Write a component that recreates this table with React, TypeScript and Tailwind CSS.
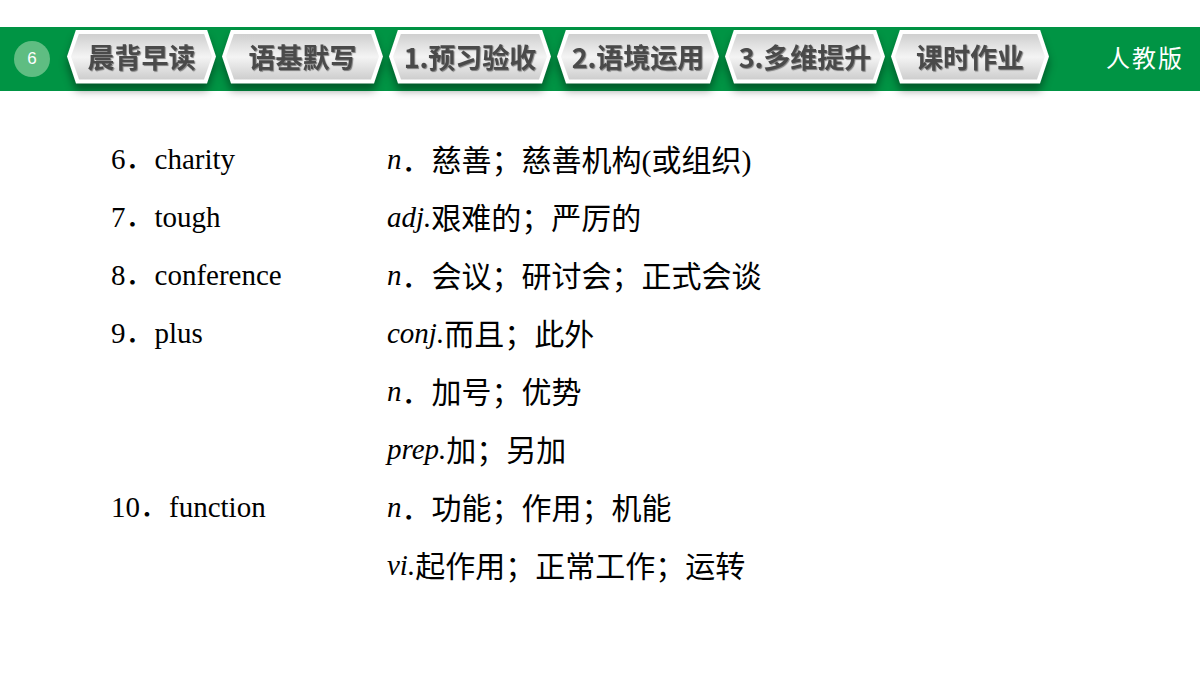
import React from 'react';

const tabs = [
  { label: '晨背早读', w: 'w-[149px]' },
  { label: '语基默写', w: 'w-[161px]' },
  { label: '1.预习验收', w: 'w-[162px]' },
  { label: '2.语境运用', w: 'w-[162px]' },
  { label: '3.多维提升', w: 'w-[160px]' },
  { label: '课时作业', w: 'w-[158px]' },
];

const hex = 'polygon(9px 0, calc(100% - 9px) 0, 100% 50%, calc(100% - 9px) 100%, 9px 100%, 0 50%)';
const hexIn = 'polygon(8px 0, calc(100% - 8px) 0, 100% 50%, calc(100% - 8px) 100%, 8px 100%, 0 50%)';

const rows: { num: string; word: string; pos: string; def: string }[] = [
  { num: '6．', word: 'charity', pos: 'n', def: '．慈善；慈善机构(或组织)' },
  { num: '7．', word: 'tough', pos: 'adj.', def: '艰难的；严厉的' },
  { num: '8．', word: 'conference', pos: 'n', def: '．会议；研讨会；正式会谈' },
  { num: '9．', word: 'plus', pos: 'conj.', def: '而且；此外' },
  { num: '', word: '', pos: 'n', def: '．加号；优势' },
  { num: '', word: '', pos: 'prep.', def: '加；另加' },
  { num: '10．', word: 'function', pos: 'n', def: '．功能；作用；机能' },
  { num: '', word: '', pos: 'vi.', def: '起作用；正常工作；运转' },
];

// semicolons get a full em box, like the slide's Song font
const renderDef = (def: string) =>
  def.split('；').map((part, i, arr) => (
    <React.Fragment key={i}>
      {part}
      {i < arr.length - 1 && <span className="inline-block w-[1em]">；</span>}
    </React.Fragment>
  ));

const Tab = ({ label, w }: { label: string; w: string }) => (
  <div className="drop-shadow-[0_7px_4px_rgba(0,0,0,0.4)]">
    <div className={`bg-white p-[4px] h-[54px] ${w}`} style={{ clipPath: hex }}>
      <div
        className="w-full h-full flex items-center justify-center bg-gradient-to-b from-[#cfcfcf] via-[#f4f4f4] to-[#cdcdcd]"
        style={{ clipPath: hexIn }}
      >
        <span
          className="text-[27px] font-bold text-[#4a4a4a] leading-none [text-shadow:1px_1px_1px_rgba(0,0,0,0.45)]"
          style={{ fontFamily: '"Noto Sans CJK SC", sans-serif' }}
        >
          {label}
        </span>
      </div>
    </div>
  </div>
);

export default function App() {
  return (
    <div className="w-[1200px] h-[675px] bg-white overflow-hidden">
      <div className="h-[27px]" />
      {/* Header bar */}
      <div className="h-[64px] bg-[#009444] flex items-center pl-[14px] pr-[16px]">
        <div
          className="w-[36px] h-[36px] rounded-full bg-[#5fbd82] flex items-center justify-center text-white text-[17px]"
          style={{ fontFamily: '"Liberation Sans", sans-serif' }}
        >
          6
        </div>
        <div className="flex items-center gap-[6px] ml-[17px] mt-[-5px] z-10">
          {tabs.map((t) => (
            <Tab key={t.label} label={t.label} w={t.w} />
          ))}
        </div>
        <div
          className="ml-auto text-white text-[24px] tracking-[2px] mt-[-4px]"
          style={{ fontFamily: '"Noto Sans CJK SC", serif' }}
        >
          人教版
        </div>
      </div>

      {/* Vocabulary list */}
      <div
        className="pl-[111px] pt-[40px]"
        style={{ fontFamily: '"Liberation Serif", "Noto Sans CJK SC", serif' }}
      >
        {rows.map((r, i) => (
          <div key={i} className="flex h-[58px] items-center text-[29px] text-black">
            <div className="w-[276px] flex">
              <span>{r.num}</span>
              <span>{r.word}</span>
            </div>
            <div className="flex items-center">
              <span className="italic">{r.pos}</span>
              <span className="text-[30px]">{renderDef(r.def)}</span>
            </div>
          </div>
        ))}
      </div>
    </div>
  );
}
